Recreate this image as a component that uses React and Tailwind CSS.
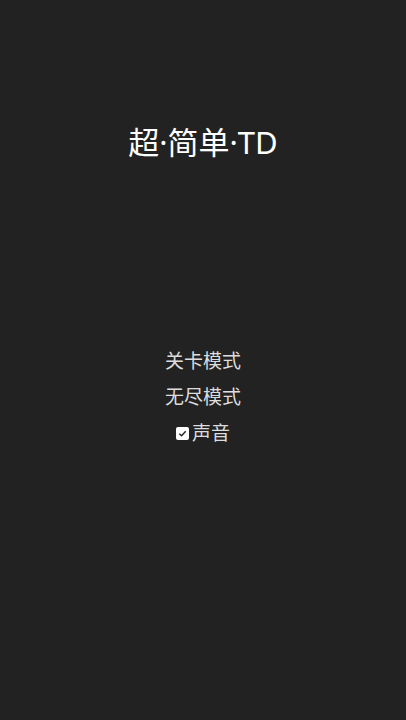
import React, { useState } from 'react'

export default function App() {
  const [sound, setSound] = useState(true)

  return (
    <div
      className="w-full h-[720px] bg-[#222222] flex flex-col items-center text-white"
      style={{ fontFamily: '"Noto Sans", "Noto Sans CJK SC", sans-serif' }}
    >
      <h1 className="mt-[121px] text-[31px] leading-[42px] text-white">超·简单·TD</h1>

      <div className="mt-[180px] flex flex-col items-center text-[19px] text-[#dddddd]">
        <div className="h-9 leading-9">关卡模式</div>
        <div className="h-9 leading-9">无尽模式</div>
        <label className="h-9 leading-9 flex items-center gap-[3px] cursor-pointer">
          <span
            onClick={() => setSound(!sound)}
            className="w-[13px] h-[13px] rounded-[2px] bg-white flex items-center justify-center"
          >
            {sound && (
              <svg viewBox="0 0 12 12" className="w-[11px] h-[11px]">
                <path d="M2.5 6.2 L5 8.5 L9.5 3.5" fill="none" stroke="#222" strokeWidth="1.5" />
              </svg>
            )}
          </span>
          <span>声音</span>
        </label>
      </div>
    </div>
  )
}
